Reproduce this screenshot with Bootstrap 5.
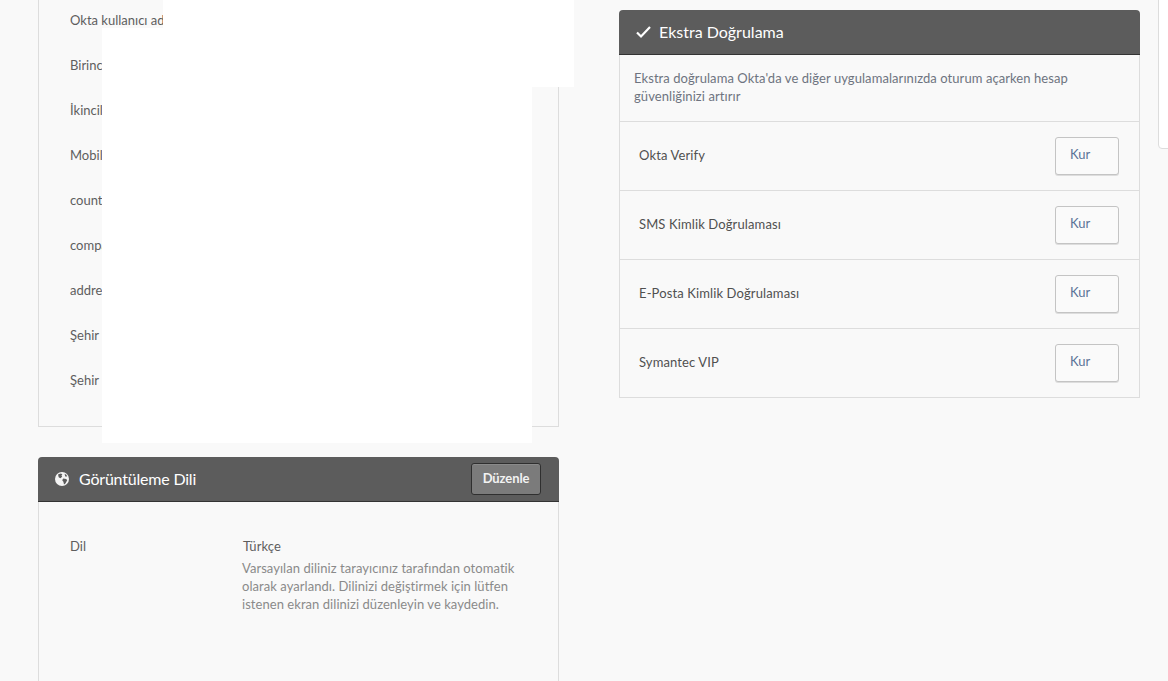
<!DOCTYPE html>
<html lang="tr">
<head>
<meta charset="utf-8">
<title>Ayarlar</title>
<link href="https://cdn.jsdelivr.net/npm/bootstrap@5.3.0/dist/css/bootstrap.min.css" rel="stylesheet">
<style>
html,body{height:681px;overflow:hidden}
body{background:#f9f9f9;font-family:Lato,"Liberation Sans",sans-serif;font-size:13px;color:#5e5e5e;position:relative}
.page-shell{padding:0 28px 0 38px;gap:60px;align-items:flex-start}
.side-col{width:521px;flex:none}
.side-right{margin-top:10px}
.pane{border:1px solid #ddd;background:#f9f9f9}
.pane-top{border-top:0;padding:10px 31px 11px}
.info-row{line-height:20px;margin-bottom:25px;white-space:nowrap}
.pane-head{height:45px;background:#5c5c5c;border-bottom:1px solid #333;border-radius:4px 4px 0 0;color:#fff;font-size:16px;padding:0 18px 0 17px}
.head-lang{margin-top:30px}
.head-title-lang{letter-spacing:-.2px}
.globe-mark{flex:none;margin-right:10px}
.tick-mark{flex:none;margin-right:7px}
.edit-btn{width:70px;height:32px;background:#7b7b7b;border:1px solid #2f2f2f;border-radius:3px;color:#f2f2f2;font-size:13px;font-weight:700;letter-spacing:-.1px;padding:0;box-shadow:inset 0 1px 0 #8a8a8a}
.edit-btn:hover{background:#7b7b7b;color:#f2f2f2}
.lang-body{border-top:0;height:190px;padding:34px 31px 0}
.lang-label{width:172px;flex:none;line-height:20px}
.lang-val{line-height:18px;width:280px;color:#8a8a8a;letter-spacing:.05px}
.lang-name{color:#5e5e5e;line-height:20px;margin-bottom:3px;padding-left:1px}
.extra-note{border-top:0;padding:14px 14px 15px;height:67px;line-height:18px;color:#6e7480;letter-spacing:.07px}
.factor-row{height:69px;border-top:0;padding:0 20px 0 19px;color:#505050;letter-spacing:.12px}
.setup-btn{width:64px;height:38px;background:#fafafa;border:1px solid #c4c4c4;border-radius:3px;color:#5a7398;font-size:13px;letter-spacing:0;text-align:left;padding:0 0 3px 14px;box-shadow:0 1px 0 #ddd}
.setup-btn:hover{background:#fafafa;border-color:#c4c4c4;color:#5a7398}
.mask{position:absolute;background:#fff}
.mask-a{left:163px;top:0;width:411px;height:87px}
.mask-b{left:102px;top:28px;width:430px;height:415px}
.edge-card{position:absolute;left:1158px;top:-10px;width:30px;height:159px;background:#fff;border:1px solid #ddd;border-radius:4px}
</style>
</head>
<body>
<div class="d-flex page-shell">
  <div class="side-col">
    <div class="pane pane-top">
      <div class="info-row">Okta kullanıcı adı</div>
      <div class="info-row">Birincil e-posta</div>
      <div class="info-row">İkincil e-posta</div>
      <div class="info-row">Mobil telefon</div>
      <div class="info-row">countryCode</div>
      <div class="info-row">companyName</div>
      <div class="info-row">address</div>
      <div class="info-row">Şehir</div>
      <div class="info-row">Şehir</div>
    </div>
    <div class="pane-head head-lang d-flex align-items-center justify-content-between">
      <div class="d-flex align-items-center">
        <svg class="globe-mark" width="14" height="14" viewBox="0 0 14 14" aria-hidden="true"><circle cx="7" cy="7" r="7" fill="#f4f4f4"/><path d="M3.2 2.2 6 1.4l1.4 1-1 1.2.8 1-1.6 1.6-1.7-.8-.6-1.5zM8.2 6.6l3 .4 1 1.2-1.8 3.2-1.4 1-.6-2.6-1.2-1.6zM9.6 1.8l1.8 1 .8 1.6-2 .2z" fill="#5c5c5c"/></svg>
        <span class="head-title-lang">Görüntüleme Dili</span>
      </div>
      <button type="button" class="btn edit-btn">Düzenle</button>
    </div>
    <div class="pane lang-body d-flex">
      <div class="lang-label">Dil</div>
      <div class="lang-val">
        <div class="lang-name">Türkçe</div>
        Varsayılan diliniz tarayıcınız tarafından otomatik olarak ayarlandı. Dilinizi değiştirmek için lütfen istenen ekran dilinizi düzenleyin ve kaydedin.
      </div>
    </div>
  </div>
  <div class="side-col side-right">
    <div class="pane-head d-flex align-items-center">
      <svg class="tick-mark" width="16" height="14" viewBox="0 0 16 14" aria-hidden="true"><path d="M1 7.5 5 11.5 14 2" fill="none" stroke="#fff" stroke-width="2.2"/></svg>
      <span>Ekstra Doğrulama</span>
    </div>
    <div class="pane extra-note">Ekstra doğrulama Okta'da ve diğer uygulamalarınızda oturum açarken hesap güvenliğinizi artırır</div>
    <div class="pane factor-row d-flex align-items-center justify-content-between"><span>Okta Verify</span><button type="button" class="btn setup-btn">Kur</button></div>
    <div class="pane factor-row d-flex align-items-center justify-content-between"><span>SMS Kimlik Doğrulaması</span><button type="button" class="btn setup-btn">Kur</button></div>
    <div class="pane factor-row d-flex align-items-center justify-content-between"><span>E-Posta Kimlik Doğrulaması</span><button type="button" class="btn setup-btn">Kur</button></div>
    <div class="pane factor-row d-flex align-items-center justify-content-between"><span>Symantec VIP</span><button type="button" class="btn setup-btn">Kur</button></div>
  </div>
</div>
<div class="mask mask-a"></div>
<div class="mask mask-b"></div>
<div class="edge-card"></div>
</body>
</html>
